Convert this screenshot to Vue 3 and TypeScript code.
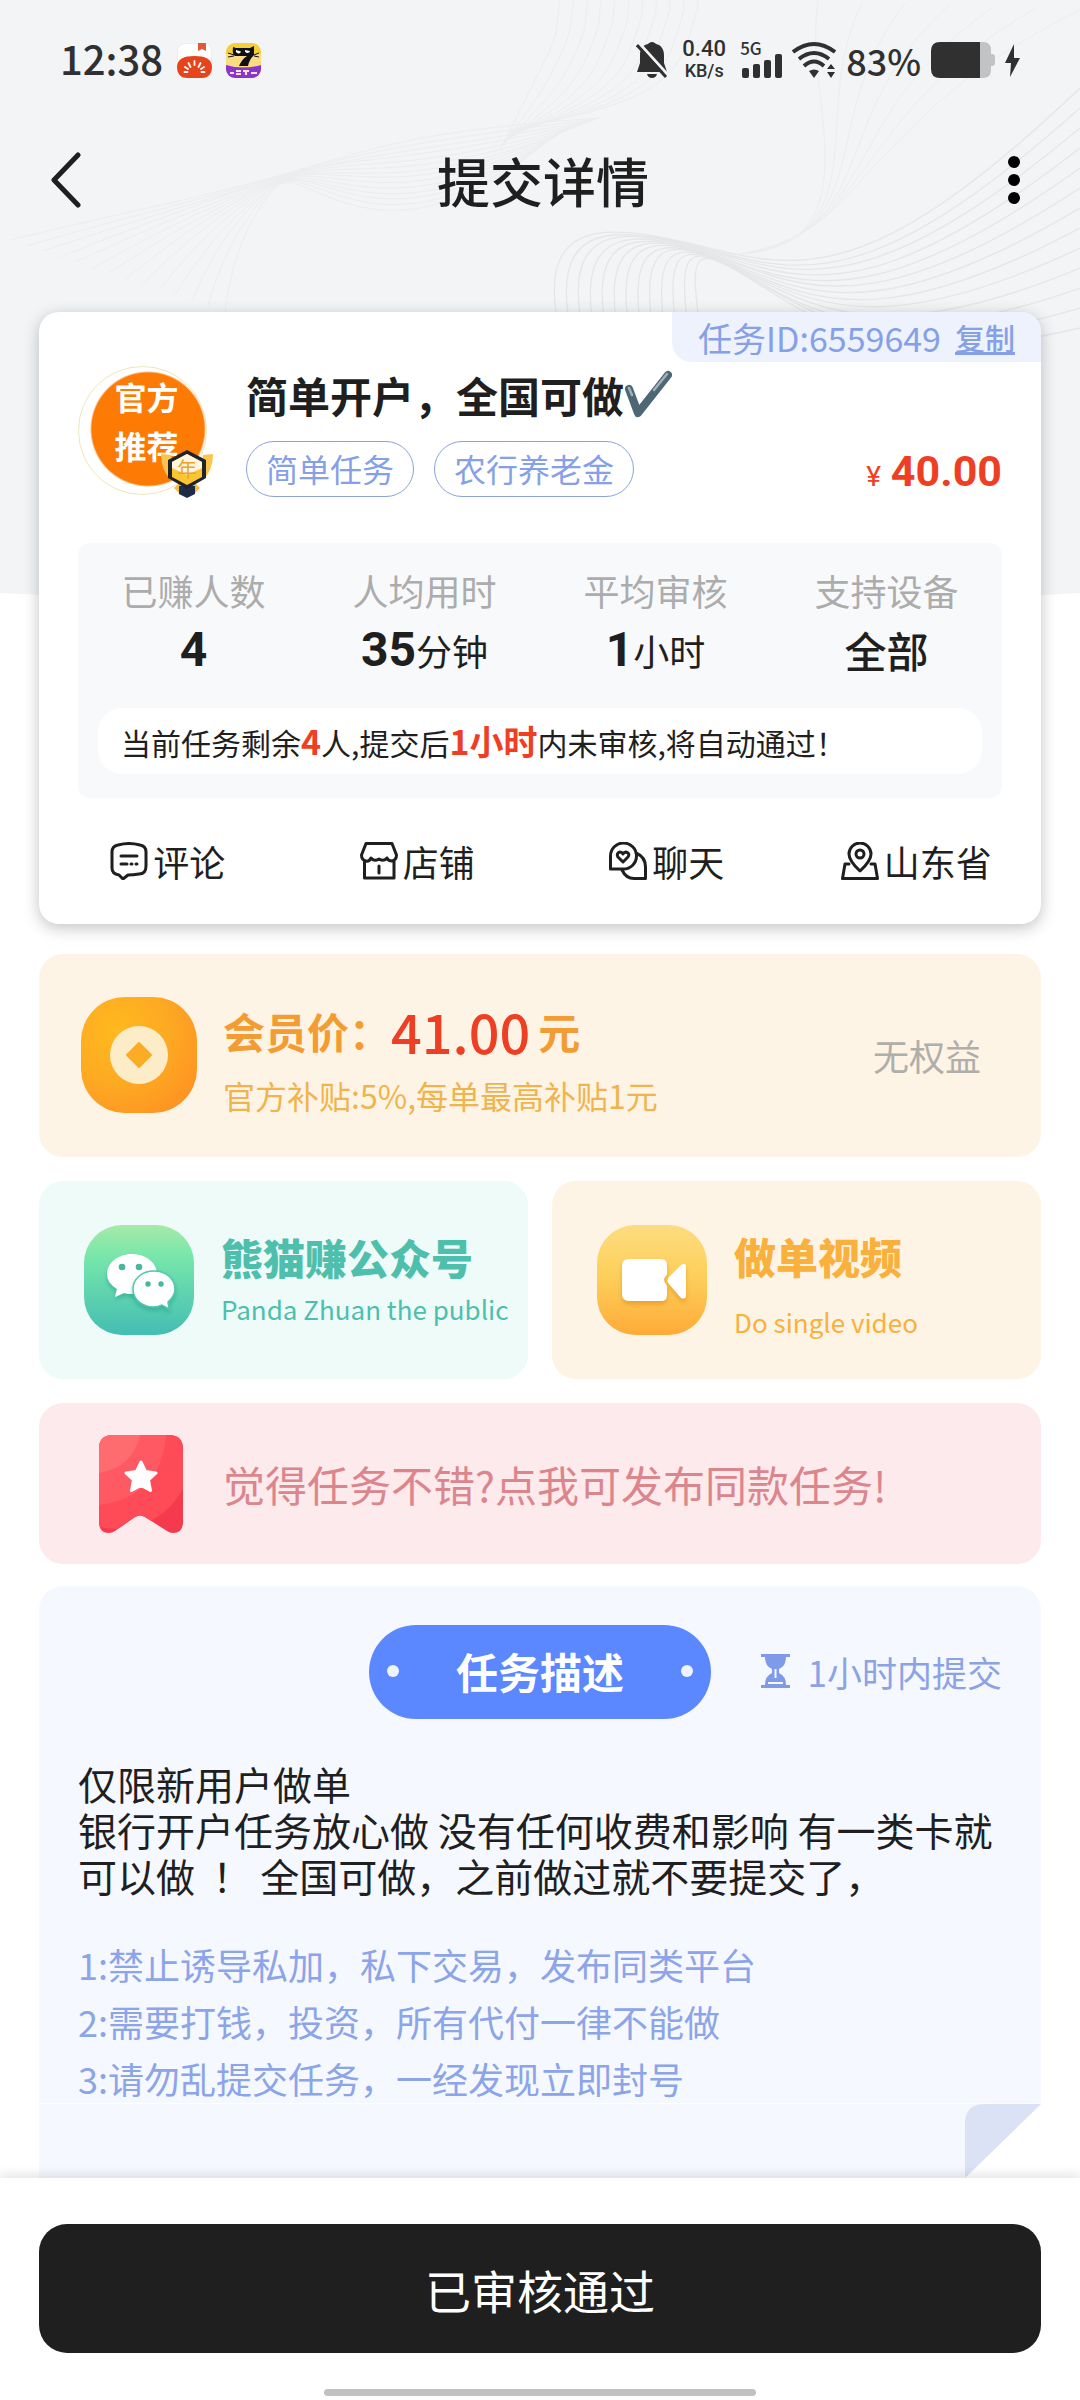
<script setup lang="ts">
interface Stat {
  label: string
  value: string
  unit?: string
  cjk?: boolean
}

const tags: string[] = ['简单任务', '农行养老金']

const stats: Stat[] = [
  { label: '已赚人数', value: '4' },
  { label: '人均用时', value: '35', unit: '分钟' },
  { label: '平均审核', value: '1', unit: '小时' },
  { label: '支持设备', value: '全部', cjk: true },
]

const rules: string[] = [
  '1:禁止诱导私加，私下交易，发布同类平台',
  '2:需要打钱，投资，所有代付一律不能做',
  '3:请勿乱提交任务，一经发现立即封号',
]

const description =
  '仅限新用户做单\n银行开户任务放心做 没有任何收费和影响 有一类卡就可以做  ！ 全国可做，之前做过就不要提交了，'

/* Line families of the header decoration, each blended between two edge curves. */
type Curve = number[]
function family(from: Curve, to: Curve, count: number): string[] {
  return Array.from({ length: count }, (_, i) => {
    const t = i / (count - 1)
    const p = from.map((v, k) => Math.round(v + (to[k] - v) * t))
    return `M${p[0]} ${p[1]}C${p.slice(2, 8).join(' ')}S${p.slice(8, 12).join(' ')}`
  })
}

const strongWaves: string[] = [
  ...family(
    [556, 312, 540, 200, 640, 232, 730, 253, 900, 260, 1080, 88],
    [700, 330, 690, 250, 690, 240, 760, 285, 900, 370, 1080, 328],
    13,
  ),
]
const softWaves: string[] = [
  ...family(
    [740, 254, 800, 250, 825, 220, 825, 160, 810, 60, 818, 0],
    [740, 254, 820, 240, 840, 200, 880, 160, 960, 70, 1080, 10],
    7,
  ),
  ...family(
    [10, 240, 90, 220, 170, 205, 270, 178, 400, 132, 600, 118],
    [225, 312, 230, 270, 245, 220, 275, 188, 380, 290, 560, 130],
    14,
  ),
  ...family(
    [510, 130, 600, 110, 670, 100, 688, 40, 695, 20, 698, 0],
    [500, 150, 520, 110, 530, 90, 545, 60, 555, 30, 560, 0],
    11,
  ),
]
</script>

<template>
  <div class="page">
    <svg class="backdrop" viewBox="0 0 1080 620" preserveAspectRatio="none" aria-hidden="true">
      <path d="M0 0H1080V593Q540 622 0 593Z" fill="#f2f4f6" />
      <g fill="none" stroke="#e4e6e8" stroke-width="1.3">
        <path v-for="(d, i) in strongWaves" :key="i" :d="d" />
      </g>
      <g fill="none" stroke="#ebedef" stroke-width="1">
        <path v-for="(d, i) in softWaves" :key="i" :d="d" />
      </g>
    </svg>

    <div class="status">
      <span class="time">12:38</span>
      <svg class="app-icon" viewBox="0 0 35 35" aria-hidden="true">
        <rect x=".5" y=".5" width="34" height="34" rx="8" fill="#fff" stroke="#e6e6e8" stroke-width=".6" />
        <path d="M21 0h8v8l-4-2-4 2z" fill="#e2583a" />
        <path d="M0 24C0 16 7 13 17.500 13S35 16 35 24c0 8-5 11-10 11H10C5 35 0 32 0 24z" fill="#e8441c" />
        <g stroke="#fff" stroke-width="1.800" stroke-linecap="round"><path d="M17.500 18v4M11.500 20l2 4M23.500 20l-2 4M8 24l3 2M27 24l-3 2M7.500 29h3M24.500 29h3" /></g>
      </svg>
      <svg class="app-icon" viewBox="0 0 35 35" aria-hidden="true">
        <defs><clipPath id="cat"><rect width="35" height="35" rx="9" /></clipPath></defs>
        <g clip-path="url(#cat)">
          <rect width="35" height="35" fill="#f5cf35" />
          <rect y="11" width="35" height="13" fill="#fbdc82" />
          <path d="M0 22q17 5 35 0v13H0z" fill="#8a35cf" />
          <path d="M7 4l3 1h14l4-2v9q-5 5-6 11h-9q3-7 8-10H9q-3-1-2-9z" fill="#111" />
          <path d="M2 10l6 2M2 14l6-1M33 10l-5 2M33 14l-5-1" stroke="#111" />
          <path d="M10 7a2.500 2.500 0 0 0 5 1.500zM19 7a2.500 2.500 0 0 0 5 1z" fill="#fff" />
          <path d="M4 30h4M10 28h5M10 31h5M17 28h6M20 28v4M25 30h6" stroke="#ffe9c4" stroke-width="2.200" />
        </g>
      </svg>
      <div class="status-right">
        <svg width="32" height="36" viewBox="0 0 32 36" aria-hidden="true">
          <path d="M16 0c2 0 3 1 4 2 5 1 8 5 8 11v8l3 9H1l3-9v-8C4 7 7 3 12 2c1-1 2-2 4-2zM11 32h10q-1 4-5 4t-5-4z" fill="#303030" />
          <path d="M2 0l31 34" stroke="#f2f4f6" stroke-width="3" />
          <path d="M1 3l29 32" stroke="#303030" stroke-width="3" />
        </svg>
        <span class="net"><b>0.40</b><b class="net-unit">KB/s</b></span>
        <span class="signal">
          <b>5G</b>
          <svg width="42" height="24" viewBox="0 0 42 24" fill="#303030" aria-hidden="true">
            <rect x="2" y="14" width="7" height="10" rx="2" /><rect x="13" y="10" width="7" height="14" rx="2" /><rect x="24" y="6" width="7" height="18" rx="2" /><rect x="35" y="0" width="7" height="24" rx="2" />
          </svg>
        </span>
        <svg width="44" height="36" viewBox="0 0 44 36" aria-hidden="true">
          <g fill="none" stroke="#303030" stroke-width="3.800"><path d="M1 10Q22-6 43 10" /><path d="M7 17Q22 5 37 17" /><path d="M12 24Q22 15 32 24" /></g>
          <path d="M17 29q5-3 10 0l-5 7zM39 22l4 5h-8zM39 36l4-6h-8z" fill="#303030" />
        </svg>
        <span class="percent">83%</span>
        <svg width="64" height="36" viewBox="0 0 64 36" aria-hidden="true">
          <path d="M48 0h4q8 0 8 8v4h1q3 0 3 3v6q0 3-3 3h-1v4q0 8-8 8h-4z" fill="#c2c3c5" />
          <path d="M49 0H9Q0 0 0 9v18q0 9 9 9h40z" fill="#303030" />
        </svg>
        <svg width="15" height="33" viewBox="0 0 15 33" aria-hidden="true"><path d="M9 0L0 19h6L5 33l10-19H9z" fill="#303030" /></svg>
      </div>
    </div>

    <header class="nav">
      <button class="nav-btn" type="button" aria-label="返回">
        <svg width="32" height="56" viewBox="0 0 32 56" aria-hidden="true"><path d="M28 3L4 28l24 25" fill="none" stroke="#1f1f1f" stroke-width="5" stroke-linecap="round" stroke-linejoin="round" /></svg>
      </button>
      <h1>提交详情</h1>
      <button class="nav-btn" type="button" aria-label="更多">
        <svg width="12" height="48" viewBox="0 0 12 48" aria-hidden="true"><circle cx="6" cy="6" r="6" /><circle cx="6" cy="24" r="6" /><circle cx="6" cy="42" r="6" /></svg>
      </button>
    </header>

    <main>
      <section class="task-card">
        <div class="task-id">任务ID:6559649<button type="button">复制</button></div>

        <div class="task-head">
          <div class="avatar">
            <span>官方</span><span>推荐</span>
            <svg class="medal" viewBox="0 0 54 48" aria-hidden="true">
              <path d="M1 4q0 16 10 26l4-3-4-22zM53 4q0 16-10 26l-4-3 4-22z" fill="#f9c54a" />
              <path d="M14 38l5 5h16l5-5-4-4H18z" fill="#f7bd3c" />
              <path d="M19 36h16v8l-8 4-8-4z" fill="#1f2c47" />
              <path d="M27 0l19 10v18L27 39 8 28V10z" fill="#20232b" />
              <path d="M27 4l15 8v15l-15 8-15-8V12z" fill="#fbc531" />
              <path d="M27 4l15 8v6L27 25l-15-7v-6z" fill="#fff6dc" />
              <text x="27" y="27" text-anchor="middle" font-size="20" fill="#eaa52d">年</text>
            </svg>
          </div>
          <div class="task-info">
            <h2>
              简单开户，全国可做<svg width="48" height="48" viewBox="0 0 48 48" role="img" aria-label="✔">
                <path d="M5 19L14 43L44 5" fill="none" stroke="#4d6874" stroke-width="8" stroke-linecap="round" stroke-linejoin="round" />
                <path d="M5 18l3 7M43 4L30 20" stroke="#9fb2bc" stroke-width="2.500" stroke-linecap="round" />
              </svg>
            </h2>
            <div class="task-meta">
              <span v-for="tag in tags" :key="tag" class="tag">{{ tag }}</span>
              <span class="price"><small>¥</small>40.00</span>
            </div>
          </div>
        </div>

        <div class="stats">
          <dl>
            <div v-for="s in stats" :key="s.label">
              <dt>{{ s.label }}</dt>
              <dd><span :class="s.cjk ? 'value-cjk' : 'value'">{{ s.value }}</span>{{ s.unit }}</dd>
            </div>
          </dl>
          <p class="notice">当前任务剩余<b>4</b>人,提交后<b>1小时</b>内未审核,将自动通过！</p>
        </div>

        <nav class="links">
          <a href="#comments">
            <svg width="38" height="38" viewBox="0 0 38 38" aria-hidden="true">
              <path d="M8 3Q19 0 30 3Q36 4 36 10V24Q36 32 29 32Q23 33 18 33L13 37L9 33Q2 32 2 26V10Q2 4 8 3zM11 14H27M11 22H17M21 22H22M26 22H27" />
            </svg>评论
          </a>
          <a href="#shop">
            <svg width="38" height="38" viewBox="0 0 38 38" aria-hidden="true">
              <path d="M6 1.500H32L36.500 13Q36.500 18 32 19Q28 19 27 16Q24 20 19 17Q14 20 11 16Q9 20 6 19Q1.500 18 1.500 13zM4.500 19V36H34V19M19 24V31" />
            </svg>店铺
          </a>
          <a href="#chat">
            <svg width="38" height="38" viewBox="0 0 38 38" aria-hidden="true">
              <path d="M1.500 27V14A13 13 0 1 1 14.500 27zM27 11Q36.500 15 36.500 25V36.500H25Q17 36.500 13 28M14 20L9 15Q7 11 11 10Q13 10 14 12Q16 9 19 11Q21 13 18 16z" />
            </svg>聊天
          </a>
          <a href="#region">
            <svg width="38" height="38" viewBox="0 0 38 38" aria-hidden="true">
              <path d="M19 29Q8 19 8 12A11 11 0 0 1 30 12Q30 19 19 29zM8 22H4L1.500 36.500H36.500L34 22H30" /><circle cx="19" cy="12" r="4" />
            </svg>山东省
          </a>
        </nav>
      </section>

      <section class="member">
        <svg width="116" height="116" viewBox="0 0 116 116" aria-hidden="true">
          <defs><radialGradient id="coin" cx=".3" cy=".3" r=".85"><stop offset="0" stop-color="#ffb81e" /><stop offset=".5" stop-color="#fdab22" /><stop offset="1" stop-color="#ff9222" /></radialGradient></defs>
          <rect width="116" height="116" rx="44" fill="url(#coin)" />
          <circle cx="58" cy="58" r="29" fill="#fdecc8" />
          <path d="M58 46l12 12-12 12-12-12z" fill="#fbac25" stroke="#fbac25" stroke-width="2" stroke-linejoin="round" />
        </svg>
        <div class="member-text">
          <p class="member-price">会员价：<strong>41.00</strong>元</p>
          <p class="member-note">官方补贴:5%,每单最高补贴1元</p>
        </div>
        <span class="member-state">无权益</span>
      </section>

      <div class="duo">
        <a class="tile green" href="#wechat">
          <svg width="110" height="110" viewBox="0 0 110 110" aria-hidden="true">
            <defs>
              <linearGradient id="mint" x1="0" y1="0" x2="0" y2="1"><stop offset="0" stop-color="#a5eaa8" /><stop offset=".3" stop-color="#76e6ab" /><stop offset="1" stop-color="#44bdb3" /></linearGradient>
              <filter id="lift" x="-20%" y="-20%" width="140%" height="150%"><feDropShadow dx="0" dy="3" stdDeviation="2" flood-color="#1b8f80" flood-opacity=".45" /></filter>
            </defs>
            <rect width="110" height="110" rx="38" fill="url(#mint)" />
            <g filter="url(#lift)">
              <path d="M48 29c14 0 25 9 25 20S62 69 48 69q-5 0-8-1l-9 4 2-8q-10-6-10-15c0-11 11-20 25-20z" fill="#fff" />
            </g>
            <g filter="url(#lift)">
              <path d="M70 46c12 0 21 8 21 18q0 7-7 13l1 7-7-4q-4 2-8 2c-12 0-21-8-21-18s9-18 21-18z" fill="#fff" stroke="#52c7ae" stroke-width="1.500" />
            </g>
            <g fill="#48b7a0"><circle cx="38" cy="42" r="3.300" /><circle cx="55" cy="42" r="3.300" /><circle cx="64" cy="59" r="2.700" /><circle cx="77" cy="59" r="2.700" /></g>
          </svg>
          <div>
            <h3>熊猫赚公众号</h3>
            <p>Panda Zhuan the public</p>
          </div>
        </a>
        <a class="tile amber" href="#video">
          <svg width="110" height="110" viewBox="0 0 110 110" aria-hidden="true">
            <defs>
              <linearGradient id="sun" x1="0" y1="0" x2="0" y2="1"><stop offset="0" stop-color="#fddc80" /><stop offset=".45" stop-color="#fdd05c" /><stop offset="1" stop-color="#ffab37" /></linearGradient>
              <filter id="glow" x="-20%" y="-20%" width="140%" height="150%"><feDropShadow dx="0" dy="3" stdDeviation="2" flood-color="#d67f10" flood-opacity=".5" /></filter>
            </defs>
            <rect width="110" height="110" rx="38" fill="url(#sun)" />
            <path filter="url(#glow)" d="M32 34h32q6 0 6 6v8q0 2-2 4t0 6q2 2 2 4v8q0 6-6 6H32q-7 0-7-7V41q0-7 7-7zM72 52l12-12q5-3 5 2v28q0 5-5 3L72 59q-3-3 0-7z" fill="#fff" />
          </svg>
          <div>
            <h3>做单视频</h3>
            <p>Do single video</p>
          </div>
        </a>
      </div>

      <a class="banner" href="#publish">
        <svg width="84" height="98" viewBox="0 0 84 98" aria-hidden="true">
          <defs><clipPath id="ribbon"><path d="M14 0h56q14 0 14 14v73q0 11-10 11-3 0-6-2L46 82q-5-3-10 0L16 96q-3 2-6 2-10 0-10-11V14Q0 0 14 0z" /></clipPath></defs>
          <g clip-path="url(#ribbon)">
            <rect width="84" height="98" fill="#f53a4e" />
            <circle cx="18" cy="20" r="74" fill="#ff4a57" />
            <path d="M0 0H67Q62 62 0 70z" fill="#ff5a64" />
            <path d="M0 0H41Q34 32 0 38z" fill="#ff6c6f" />
          </g>
          <path d="M42 27l4.500 9.500 10.500 1.500-7.500 7 2 10.500-9.500-5-9.500 5 2-10.500-7.500-7 10.500-1.500z" fill="#fff" stroke="#fff" stroke-width="3" stroke-linejoin="round" />
        </svg>
        觉得任务不错?点我可发布同款任务!
      </a>

      <section class="detail">
        <div class="detail-head">
          <h3 class="pill">任务描述</h3>
          <span class="deadline">
            <svg width="29" height="34" viewBox="0 0 29 34" fill="#7f9ae8" aria-hidden="true">
              <path d="M0 0h29v3H0zM0 31h29v3H0zM4 3h21q0 9-7 12v4q7 3 7 12H4q0-9 7-12v-4Q4 12 4 3z" />
              <path d="M14.500 15v9M7 29h15" stroke="#f5f8ff" stroke-width="2" />
            </svg>1小时内提交
          </span>
        </div>
        <p class="description">{{ description }}</p>
        <ul>
          <li v-for="rule in rules" :key="rule">{{ rule }}</li>
        </ul>
        <div class="fold-row">
          <svg width="76" height="74" viewBox="0 0 76 75" preserveAspectRatio="none" aria-hidden="true">
            <path d="M76 0V75H0z" fill="#fff" />
            <path d="M0 75V20Q0 0 20 0H76z" fill="#dce2f5" />
          </svg>
        </div>
      </section>
    </main>

    <footer>
      <button class="submit" type="button">已审核通过</button>
      <div class="home-bar"></div>
    </footer>
  </div>
</template>

<style>
body {
  background: #fff;
}
</style>

<style scoped>
* {
  box-sizing: border-box;
  margin: 0;
  padding: 0;
}

.page {
  position: relative;
  display: flex;
  flex-direction: column;
  min-height: 100vh;
  color: #1f1f1f;
  font-family: "Noto Sans CJK SC", "Noto Sans", sans-serif;
  font-size: 36px;
}

.page > * {
  position: relative;
}

.page > .backdrop {
  position: absolute;
  top: 0;
  left: 0;
  width: 100%;
  height: 620px;
}

svg {
  display: block;
  flex: none;
}

button {
  border: 0;
  background: none;
  color: inherit;
  font: inherit;
}

a {
  color: inherit;
  text-decoration: none;
}

.status {
  display: flex;
  align-items: center;
  gap: 14px;
  height: 120px;
  padding: 0 60px;
  color: #303030;
}

.time {
  padding-bottom: 4px;
  font-size: 40px;
  font-weight: 500;
}

.app-icon {
  width: 35px;
  height: 35px;
}

.status-right {
  display: flex;
  align-items: center;
  gap: 10px;
  margin-left: auto;
}

.net {
  display: flex;
  flex-direction: column;
  align-items: center;
  width: 52px;
  font-family: Roboto, sans-serif;
  font-size: 22px;
  line-height: 22px;
}

.net b,
.signal b {
  font-weight: 500;
}

.net .net-unit {
  font-size: 18px;
}

.signal {
  display: flex;
  flex-direction: column;
  height: 36px;
}

.signal b {
  font-size: 17px;
  line-height: 12px;
}

.percent {
  font-size: 36px;
  font-weight: 500;
}

.nav {
  display: flex;
  align-items: center;
  justify-content: space-between;
  height: 120px;
  padding: 0 44px 0 50px;
}

.nav-btn {
  display: flex;
  width: 44px;
}

.nav-btn:last-child {
  justify-content: center;
}

h1 {
  font-size: 53px;
  font-weight: 500;
}

main {
  display: flex;
  flex: 1;
  flex-direction: column;
  gap: 24px;
  padding: 72px 39px 0;
}

.task-card {
  margin-bottom: 6px;
  border-radius: 20px;
  background: #fff;
  box-shadow: 0 4px 16px rgba(0, 0, 0, 0.24);
}

.task-id {
  display: flex;
  align-items: center;
  width: fit-content;
  height: 50px;
  margin-left: auto;
  padding: 0 26px;
  border-radius: 0 20px 0 20px;
  background: #edf2fd;
  color: #86a0e8;
  font-size: 34px;
}

.task-id button {
  margin-left: 14px;
  font-size: 30px;
  font-weight: 500;
  text-decoration: underline;
}

.task-head {
  display: flex;
  gap: 39px;
  padding: 4px 39px 46px;
}

.avatar {
  position: relative;
  display: flex;
  flex: none;
  flex-direction: column;
  align-items: center;
  justify-content: center;
  width: 129px;
  height: 129px;
  padding: 0 0 20px 8px;
  border: 1px solid #f0e6b8;
  border-radius: 50%;
  background: radial-gradient(circle at 69px 62px, #fd7a05 56px, #fff 58px);
  color: #fff;
  font-size: 32px;
  font-weight: 700;
  line-height: 49px;
}

.medal {
  position: absolute;
  right: -8px;
  bottom: -4px;
  width: 54px;
  height: 48px;
  font-weight: 400;
}

.task-info {
  flex: 1;
}

h2 {
  display: flex;
  align-items: center;
  height: 56px;
  font-size: 42px;
  font-weight: 700;
}

.task-meta {
  display: flex;
  align-items: center;
  gap: 20px;
  height: 56px;
  margin-top: 19px;
}

.tag {
  height: 56px;
  padding: 0 19px;
  border: 1px solid #8aa3dc;
  border-radius: 28px;
  color: #86a0e8;
  font-size: 32px;
  line-height: 52px;
}

.price {
  margin-left: auto;
  padding-top: 4px;
  color: #ee3f24;
  font: 700 43px/52px Roboto, sans-serif;
}

.price small {
  margin-right: 10px;
  font-size: 28px;
  font-weight: 400;
  line-height: 1;
}

.stats {
  margin: 0 39px;
  padding: 23px 20px 24px;
  border-radius: 12px;
  background: #f8f9fb;
}

dl {
  display: flex;
  margin: 0 -20px;
}

dl > div {
  flex: 1;
  text-align: center;
}

dt {
  color: #acacac;
  line-height: 48px;
}

dd {
  height: 72px;
  line-height: 72px;
}

.value {
  font-family: Roboto, sans-serif;
  font-size: 48px;
  font-weight: 700;
}

.value-cjk {
  font-size: 42px;
  font-weight: 500;
}

.notice {
  height: 66px;
  margin-top: 22px;
  padding: 0 23px;
  border-radius: 24px;
  background: #fff;
  font-size: 30px;
  line-height: 68px;
  white-space: nowrap;
}

.notice b {
  color: #ee3f24;
  font-size: 34px;
  line-height: 1;
}

.links {
  display: flex;
  height: 126px;
  padding-left: 4px;
}

.links a {
  display: flex;
  flex: 1;
  align-items: center;
  justify-content: center;
  gap: 5px;
}

.links svg {
  fill: none;
  stroke: #1f1f1f;
  stroke-linecap: round;
  stroke-linejoin: round;
  stroke-width: 3px;
}

.member {
  display: flex;
  align-items: center;
  gap: 26px;
  height: 203px;
  padding: 0 60px 2px 42px;
  border-radius: 24px;
  background: #fef4e5;
}

.member-text {
  padding-top: 8px;
}

.member-price {
  display: flex;
  align-items: center;
  height: 72px;
  color: #f39c33;
  font-size: 42px;
  font-weight: 700;
}

.member-price strong {
  margin-right: 8px;
  color: #ee3f24;
  font-size: 54px;
  font-weight: 500;
}

.member-note {
  color: #f0b44e;
  font-size: 32px;
  line-height: 56px;
}

.member-state {
  margin-left: auto;
  color: #b0aeaa;
}

.duo {
  display: flex;
  gap: 24px;
}

.tile {
  display: flex;
  flex: 1;
  align-items: center;
  gap: 27px;
  height: 198px;
  padding-left: 45px;
  border-radius: 24px;
  white-space: nowrap;
}

.tile h3 {
  font-size: 42px;
  font-weight: 900;
  line-height: 60px;
}

.tile p {
  font-size: 26px;
  line-height: 40px;
}

.green {
  background: #eefbf9;
  color: #4dbfac;
}

.green div {
  padding-bottom: 4px;
}

.green h3 {
  padding-bottom: 2px;
}

.amber {
  background: #fef4e5;
  color: #f9b03c;
}

.amber div {
  padding-top: 8px;
}

.amber h3 {
  padding-bottom: 16px;
}

.banner {
  display: flex;
  align-items: center;
  gap: 40px;
  height: 161px;
  padding: 0 60px;
  border-radius: 24px;
  background: #fdeaec;
  color: #db858d;
  font-size: 42px;
}

.detail {
  display: flex;
  flex: 1;
  flex-direction: column;
  margin-top: -2px;
  border-radius: 24px 24px 0 0;
  background: #f5f8fe;
}

.detail-head {
  display: grid;
  grid-template-columns: 1fr auto 1fr;
  align-items: center;
  padding: 39px 39px 0;
}

.pill {
  display: flex;
  grid-column: 2;
  align-items: center;
  justify-content: space-between;
  width: 342px;
  height: 94px;
  padding: 0 18px 3px;
  border-radius: 47px;
  background: #5b87ff;
  color: #fff;
  font-size: 42px;
  font-weight: 700;
}

.pill::before,
.pill::after {
  width: 12px;
  height: 12px;
  border-radius: 50%;
  background: #eef3ff;
  content: "";
}

.deadline {
  display: flex;
  align-items: center;
  justify-content: flex-end;
  gap: 18px;
  padding-bottom: 2px;
  color: #8ba3e4;
  font-size: 35px;
  white-space: nowrap;
}

.description {
  padding: 41px 39px 0;
  font-size: 39px;
  line-height: 46px;
  white-space: pre-wrap;
}

ul {
  display: flex;
  flex-direction: column;
  gap: 9px;
  padding: 42px 39px 0;
  color: #8ca4e8;
  line-height: 48px;
  list-style: none;
}

.fold-row {
  display: flex;
  align-items: flex-end;
  justify-content: flex-end;
  margin-top: auto;
  border-top: 1px solid #fdfeff;
}

footer {
  padding: 46px 39px 4px;
  background: #fff;
  box-shadow: 0 -4px 10px rgba(0, 0, 0, 0.1);
}

.submit {
  display: block;
  width: 100%;
  height: 129px;
  border-radius: 28px;
  background: #1f1f1f;
  color: #fff;
  font-size: 46px;
}

.home-bar {
  width: 432px;
  max-width: 60%;
  height: 7px;
  margin: 36px auto 0;
  border-radius: 4px;
  background: #c1c1c1;
}
</style>
